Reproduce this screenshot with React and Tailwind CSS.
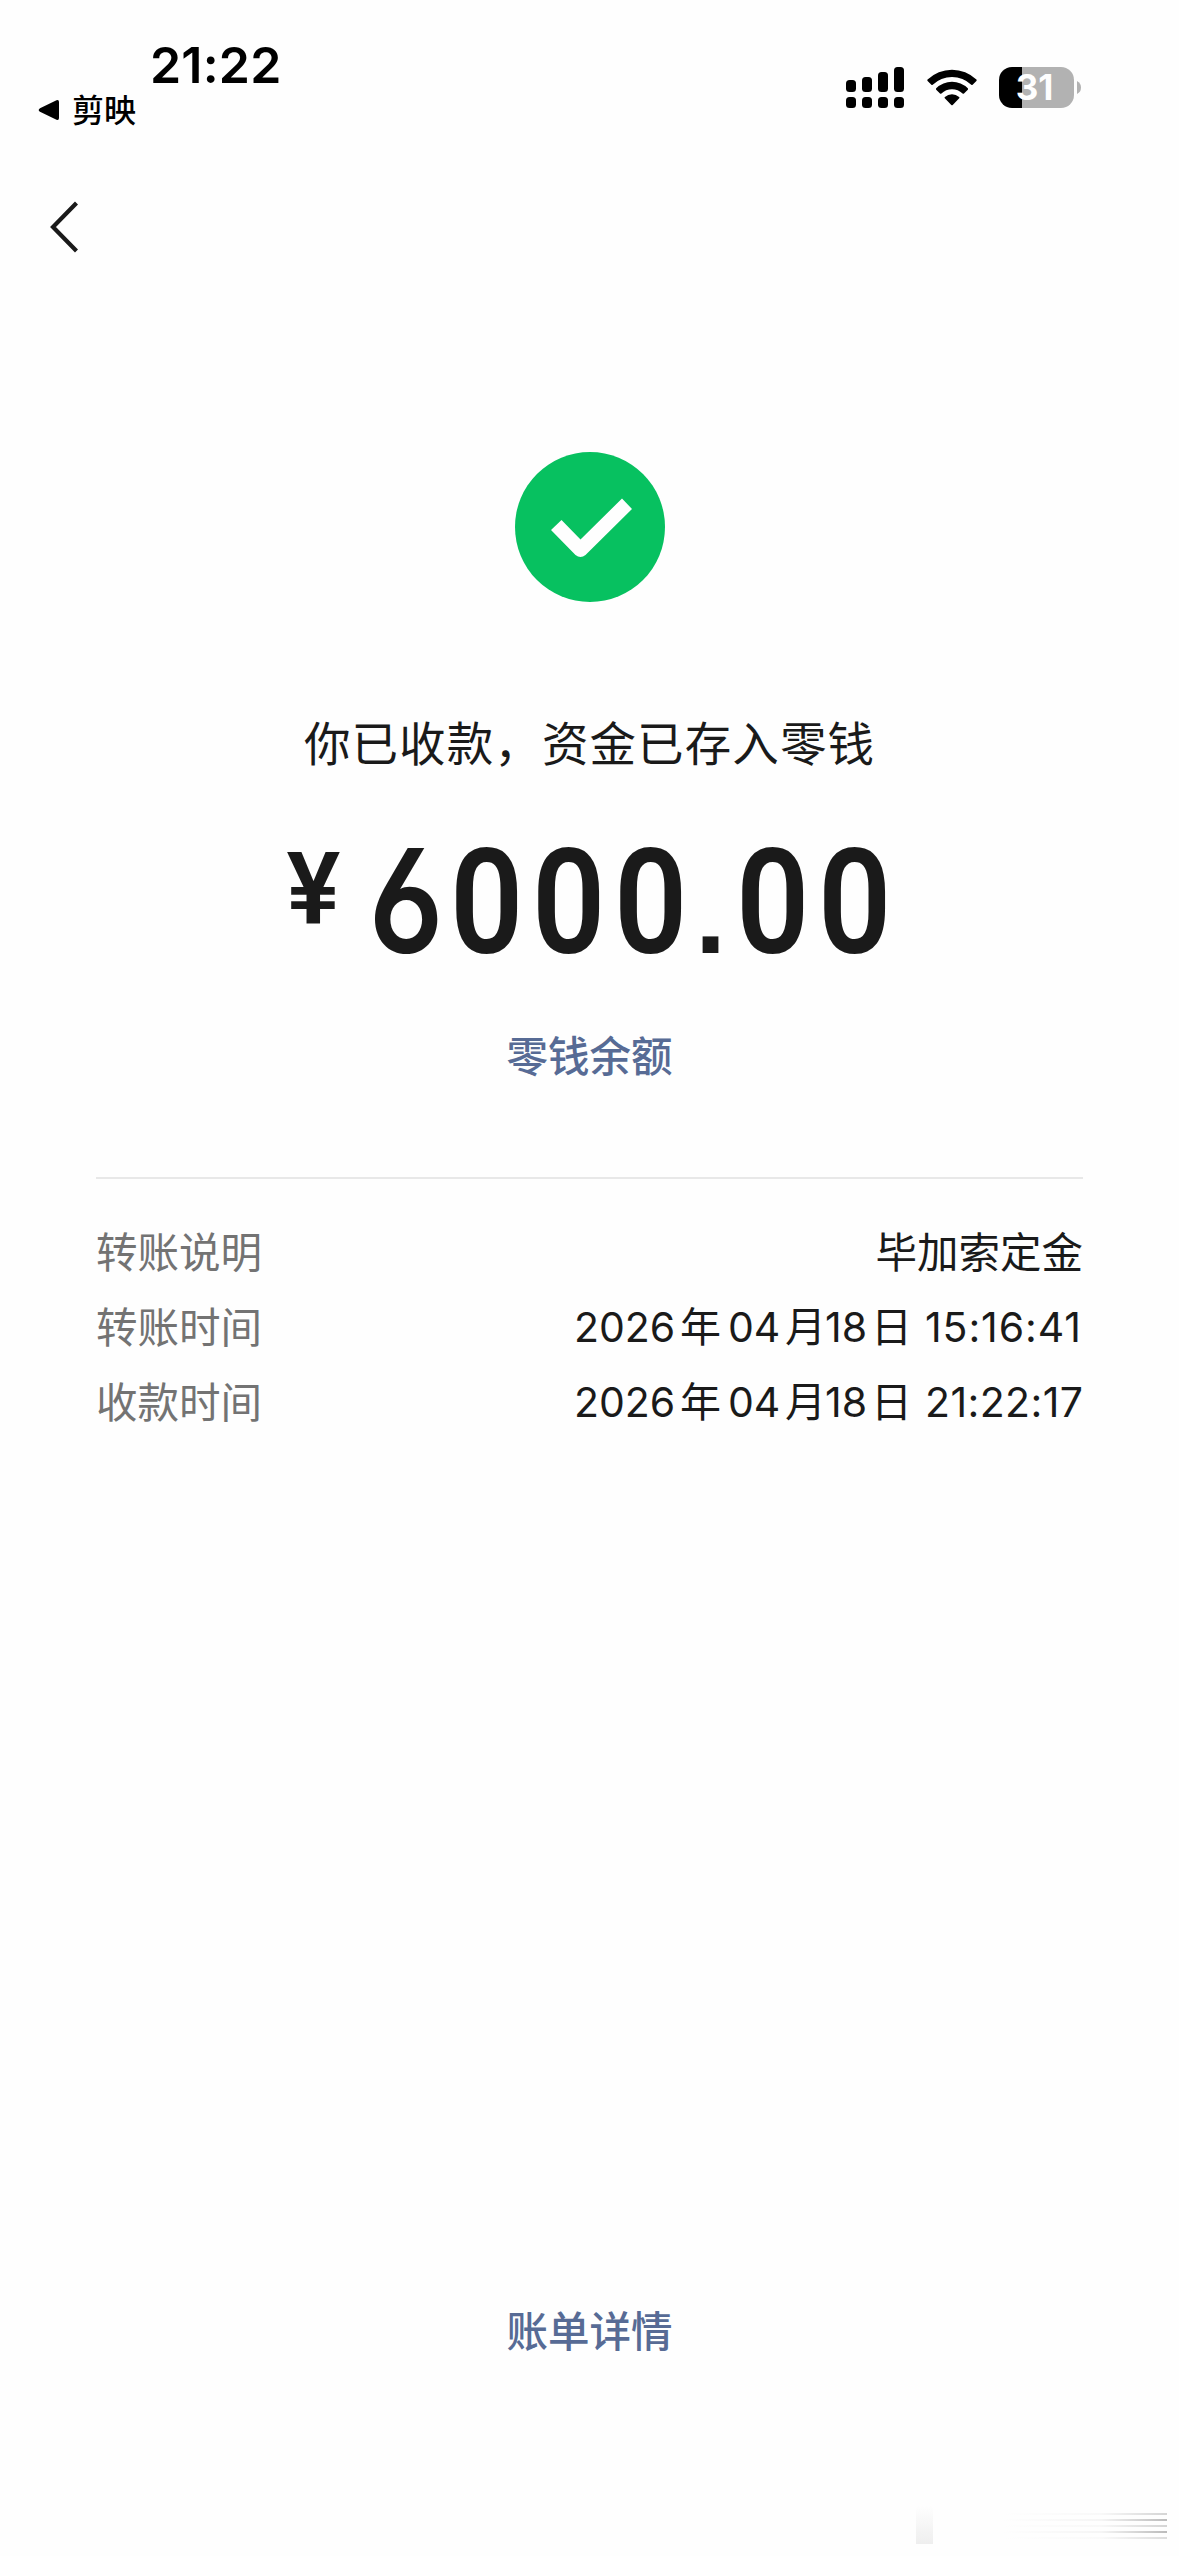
import React from "react";

const details = [
  { label: "转账说明", parts: ["毕加索定金"] },
  {
    label: "转账时间",
    parts: ["2026", "年", "04", "月", "18", "日", "15:16:41"],
    tracking: "tracking-[0.9px]",
  },
  {
    label: "收款时间",
    parts: ["2026", "年", "04", "月", "18", "日", "21:22:17"],
    tracking: "tracking-[0.4px]",
  },
];

const SignalIcon = () => (
  <svg width="58" height="41" viewBox="0 0 58 41" className="shrink-0">
    <rect x="0" y="13" width="10" height="12" rx="3.5" />
    <rect x="16" y="10" width="10" height="15" rx="3.5" />
    <rect x="32" y="5" width="10" height="20" rx="3.5" />
    <rect x="48" y="0" width="10" height="25" rx="3.5" />
    <rect x="0" y="30" width="10" height="11" rx="3.5" />
    <rect x="16" y="30" width="10" height="11" rx="3.5" />
    <rect x="32" y="30" width="10" height="11" rx="3.5" />
    <rect x="48" y="30" width="10" height="11" rx="3.5" />
  </svg>
);

const WifiIcon = () => (
  <svg width="50" height="38" viewBox="0 0 50 38" className="shrink-0">
    <path d="M0.6 10.6 A35 35 0 0 1 49.4 10.6 Q50 11.3 49.4 12 L45.6 15.7 Q45 16.3 44.3 15.7 A28 28 0 0 0 5.7 15.7 Q5 16.3 4.4 15.7 L0.6 12 Q0 11.3 0.6 10.6Z" />
    <path d="M9.2 19.3 A22.6 22.6 0 0 1 40.8 19.3 Q41.5 20 40.8 20.7 L37 24.4 Q36.3 25.1 35.6 24.4 A15.4 15.4 0 0 0 14.4 24.4 Q13.7 25.1 13 24.4 L9.2 20.7 Q8.5 20 9.2 19.3Z" />
    <path d="M17.8 29.3 Q17.1 28.6 17.9 27.9 A11 11 0 0 1 32.1 27.9 Q32.9 28.6 32.2 29.3 L25.7 36 Q25 36.7 24.3 36Z" />
  </svg>
);

const Battery = () => (
  <div className="flex items-center gap-[3px]">
    <div className="flex h-[41px] w-[75px] items-center justify-center rounded-[13px] bg-[linear-gradient(to_right,#000_23px,#b2b2b2_23px)] pr-[4px] font-['Inter',sans-serif] text-[35px] leading-none font-bold text-[#fefefe]">
      31
    </div>
    <svg width="4" height="13" viewBox="0 0 4 13">
      <path d="M0 0 Q4 2 4 6.5 Q4 11 0 13Z" fill="#b2b2b2" />
    </svg>
  </div>
);

const StatusBar = () => (
  <header className="flex h-[140px] justify-between text-black">
    <div className="pt-[39px] pl-[38px]">
      <p className="pl-[112px] font-['Inter',sans-serif] text-[50px] leading-[52px] font-semibold tracking-[0.2px]">
        21:22
      </p>
      <div className="flex items-start">
        <svg width="22" height="22" viewBox="0 0 22 22" className="mt-[8px]">
          <path d="M2 9.2 L18.5 1.2 Q21 0.4 21 3 V19 Q21 21.6 18.5 20.8 L2 12.8 Q-0.6 11 2 9.2Z" />
        </svg>
        <span className="pl-3 text-[32px] leading-[35px] font-medium">剪映</span>
      </div>
    </div>
    <div className="mt-[67px] flex h-[41px] items-center pr-[98px]">
      <SignalIcon />
      <div className="w-[22.5px]" />
      <WifiIcon />
      <div className="w-[22.5px]" />
      <Battery />
    </div>
  </header>
);

const DetailRow = ({ label, parts, tracking }) => (
  <div className="flex h-[75px] items-center justify-between text-[41.5px]">
    <span className="text-[#737373]">{label}</span>
    {parts.length === 1 ? (
      <span>{parts[0]}</span>
    ) : (
      <span className="flex items-center pt-[5px] font-['Inter','Noto_Sans_CJK_SC',sans-serif] text-[41px] whitespace-nowrap">
        <span className="w-[106px]">{parts[0]}</span>
        <span className="w-[48px]">{parts[1]}</span>
        <span className="w-[57px]">{parts[2]}</span>
        <span className="w-[40px]">{parts[3]}</span>
        <span className="w-[46px]">{parts[4]}</span>
        <span className="w-[54px]">{parts[5]}</span>
        <span className={`w-[158px] ${tracking}`}>{parts[6]}</span>
      </span>
    )}
  </div>
);

const App = () => {
  return (
    <div className="flex h-[2556px] w-[1179px] flex-col overflow-hidden bg-[#fefefe] font-['Noto_Sans_CJK_SC',sans-serif] text-[#1a1a1a]">
      <StatusBar />

      <nav className="h-[312px] pt-[61px] pl-[50px]">
        <svg width="30" height="52" viewBox="0 0 30 52" fill="none">
          <path d="M26.5 2 L3 26 L26.5 50" stroke="#1a1a1a" strokeWidth="4.2" />
        </svg>
      </nav>

      <main className="flex flex-col items-center">
        <svg width="150" height="150" viewBox="0 0 150 150">
          <circle cx="75" cy="75" r="75" fill="#07c160" />
          <path
            d="M36 78 L46.5 68 L65.5 87.5 L107 46.5 L117 57 L70.5 103 Q65.5 107 60.5 103Z"
            fill="#fefefe"
          />
        </svg>

        <p className="mt-[103px] text-[46.5px] leading-[72px] tracking-[1.1px]">
          你已收款，资金已存入零钱
        </p>

        {/* 金额 */}
        <div className="mt-[44px] flex h-[160px] w-[610px] items-start justify-between pl-[2px] font-['Roboto',sans-serif] font-semibold">
          <span className="mt-[17px] text-[101px] leading-none">¥</span>
          <span className="flex items-baseline text-[146px] leading-[160px]">
            <span className="w-[82px] scale-x-[0.86] text-center font-['Inter',sans-serif] text-[144px] [font-feature-settings:'cv03']">
              6
            </span>
            {["0", "0", "0", ".", "0", "0"].map((c, i) => (
              <span
                key={i}
                className={
                  c === "."
                    ? "w-[40px] text-center font-['Liberation_Sans',sans-serif] text-[112px] font-bold"
                    : "w-[82px] scale-x-[0.88] text-center"
                }
              >
                {c}
              </span>
            ))}
          </span>
        </div>

        <a className="mt-[43px] text-[41.5px] leading-[60px] font-medium text-[#576b95]">零钱余额</a>
      </main>

      <section className="mx-[96px] mt-[93px] border-t-2 border-[#e8e8e8] pt-[34px]">
        {details.map((d) => (
          <DetailRow key={d.label} label={d.label} parts={d.parts} tracking={d.tracking} />
        ))}
      </section>

      <footer className="mt-auto flex flex-col items-center">
        <a className="text-[41.5px] leading-[60px] font-medium text-[#576b95]">账单详情</a>
        <div className="flex h-[197px] w-full items-end justify-end pr-[12px] pb-[12px]">
          <div className="h-[38px] w-[17px] bg-linear-to-b from-transparent to-[#eeeeee]" />
          <div className="ml-[70px] flex w-[164px] flex-col gap-[4px] pb-[5px]">
            <div className="h-[2px] bg-linear-to-r from-transparent via-[#f8f8f8] via-60% to-[#d4d4d4]" />
            <div className="h-[2px] bg-linear-to-r from-transparent via-[#f5f5f5] via-60% to-[#bbbbbb]" />
            <div className="h-[2px] bg-linear-to-r from-transparent via-[#f8f8f8] via-60% to-[#d4d4d4]" />
            <div className="h-[2px] bg-linear-to-r from-transparent via-[#f5f5f5] via-60% to-[#bbbbbb]" />
            <div className="h-[2px] bg-linear-to-r from-transparent via-[#fafafa] via-60% to-[#dddddd]" />
          </div>
        </div>
      </footer>
    </div>
  );
};

export default App;
